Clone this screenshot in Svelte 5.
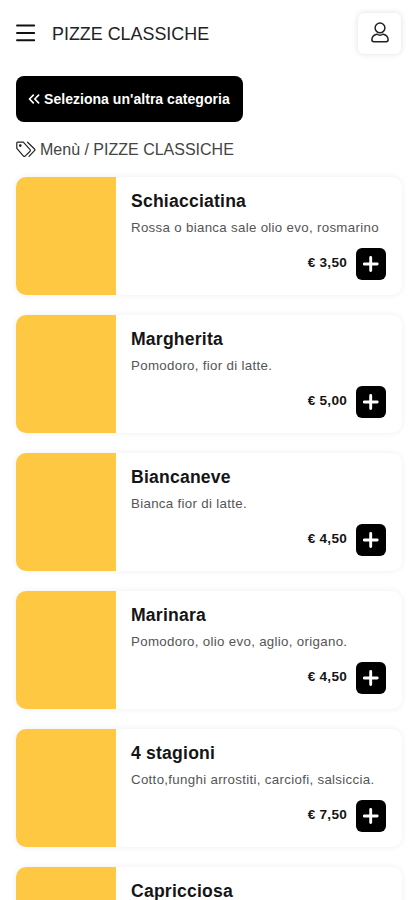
<script>
  const pizzas = [
    { name: 'Schiacciatina', text: 'Rossa o bianca sale olio evo, rosmarino', price: '3,50' },
    { name: 'Margherita', text: 'Pomodoro, fior di latte.', price: '5,00' },
    { name: 'Biancaneve', text: 'Bianca fior di latte.', price: '4,50' },
    { name: 'Marinara', text: 'Pomodoro, olio evo, aglio, origano.', price: '4,50' },
    { name: '4 stagioni', text: 'Cotto,funghi arrostiti, carciofi, salsiccia.', price: '7,50' },
    { name: 'Capricciosa' }
  ];
</script>

<div class="page">
  <header>
    <button class="menu" aria-label="Menu">
      <svg width="20" height="18" viewBox="0 0 20 18"><path d="M1 1.500h17.200M1 9h17.200M1 16.300h17.200" stroke="#111" stroke-width="1.900" stroke-linecap="round" /></svg>
    </button>
    <h1>PIZZE CLASSICHE</h1>
    <button class="user" aria-label="Account">
      <svg width="18" height="21" viewBox="0 0 18 21" fill="none" stroke="#222" stroke-width="1.500" stroke-linejoin="round"><circle cx="9" cy="5.900" r="4.900" /><path d="M5.800 12.200C2.800 12.800.9 14.800.9 17.800c0 1.300.7 1.900 1.800 1.900h12.600c1.100 0 1.800-.6 1.800-1.900 0-3-1.900-5-4.900-5.600-2 1.200-4.400 1.200-6.400 0Z" /></svg>
    </button>
  </header>

  <button class="back">
    <svg width="12" height="10" viewBox="0 0 12 10" fill="none" stroke="#fff" stroke-width="1.700" stroke-linecap="round" stroke-linejoin="round"><path d="M5.300 1.200 1.500 5l3.800 3.800M10.600 1.200 6.800 5l3.800 3.800" /></svg>
    <span>Seleziona un'altra categoria</span>
  </button>

  <nav>
    <svg width="20" height="17" viewBox="0 0 20 17" fill="none" stroke="#222" stroke-width="1.200" stroke-linejoin="round" stroke-linecap="round"><path d="M.8 1.800v5.500l6.700 7.800q.8.700 1.600 0l5-4.900q.7-.8 0-1.600L7.300 1.200H1.500q-.7 0-.7.600Z" /><path d="m11.600 1.200 6.900 6.800q.8.900 0 1.700l-5.500 5.600" /><circle cx="4.300" cy="4.600" r=".8" fill="#222" /></svg>
    <span>Menù / PIZZE CLASSICHE</span>
  </nav>

  <main>
    {#each pizzas as pizza}
      <article>
        <div class="photo"></div>
        <div class="info">
          <h2>{pizza.name}</h2>
          {#if pizza.text}
            <p>{pizza.text}</p>
            <div class="buy">
              <span class="price">€ {pizza.price}</span>
              <button class="add" aria-label="Aggiungi">
                <svg width="16" height="16" viewBox="0 0 16 16"><path d="M7.700 1.500v13M1.200 8h13" stroke="#fff" stroke-width="2.900" stroke-linecap="round" /></svg>
              </button>
            </div>
          {/if}
        </div>
      </article>
    {/each}
  </main>
</div>

<style>
  :global(body) { background: #fff; }
  * { box-sizing: border-box; }
  .page {
    width: 100%;
    height: 900px;
    overflow: hidden;
    padding: 12px 14px 0 16px;
    background: #fff;
    font-family: "Liberation Sans", Arial, sans-serif;
    color: #151515;
  }
  button { border: 0; padding: 0; font-family: inherit; background: none; }
  svg { display: block; flex: none; }
  header { display: flex; align-items: center; height: 42px; }
  .menu { width: 20px; }
  h1 { margin: 0 0 0 16px; padding-top: 1px; font-size: 17.900px; font-weight: 400; line-height: 24px; color: #222; }
  .user {
    display: flex;
    align-items: center;
    justify-content: center;
    width: 43px;
    height: 41px;
    margin-left: auto;
    padding-bottom: 2px;
    border-radius: 6px;
    background: #fff;
    box-shadow: 0 0 6px rgba(0, 0, 0, 0.13);
  }
  .back {
    display: flex;
    align-items: center;
    gap: 4px;
    width: 227px;
    height: 46px;
    margin-top: 22px;
    padding-left: 12px;
    border-radius: 8px;
    background: #000;
    color: #fff;
    font-size: 14px;
    font-weight: 700;
    letter-spacing: 0.040px;
    white-space: nowrap;
  }
  .back svg, .back span { margin-top: -1px; }
  nav {
    display: flex;
    align-items: center;
    gap: 4px;
    height: 20px;
    margin-top: 17px;
    font-size: 16px;
    color: #444;
    white-space: nowrap;
  }
  nav span { padding-top: 1px; }
  main { display: flex; flex-direction: column; gap: 20px; margin-top: 18px; }
  article {
    display: flex;
    flex: none;
    width: 386px;
    height: 118px;
    overflow: hidden;
    border-radius: 10px;
    background: #fff;
    box-shadow: 0 0 6px rgba(0, 0, 0, 0.07);
  }
  .photo { flex: none; width: 100px; background: #fec842; }
  .info { flex: 1; min-width: 0; padding: 13px 16px 0 15px; }
  h2 { margin: 0; font-size: 17.600px; line-height: 22px; font-weight: 700; letter-spacing: 0.200px; }
  p { height: 18px; margin: 7px 0 0; font-size: 13.300px; line-height: 18px; letter-spacing: 0.310px; color: #555; white-space: nowrap; }
  .buy { display: flex; align-items: center; justify-content: flex-end; gap: 9px; height: 32px; margin-top: 11px; }
  .price { margin-top: -3px; font-size: 13.600px; font-weight: 700; letter-spacing: 0.250px; }
  .add { display: flex; align-items: center; justify-content: center; width: 30px; height: 32px; border-radius: 6px; background: #000; }
</style>
